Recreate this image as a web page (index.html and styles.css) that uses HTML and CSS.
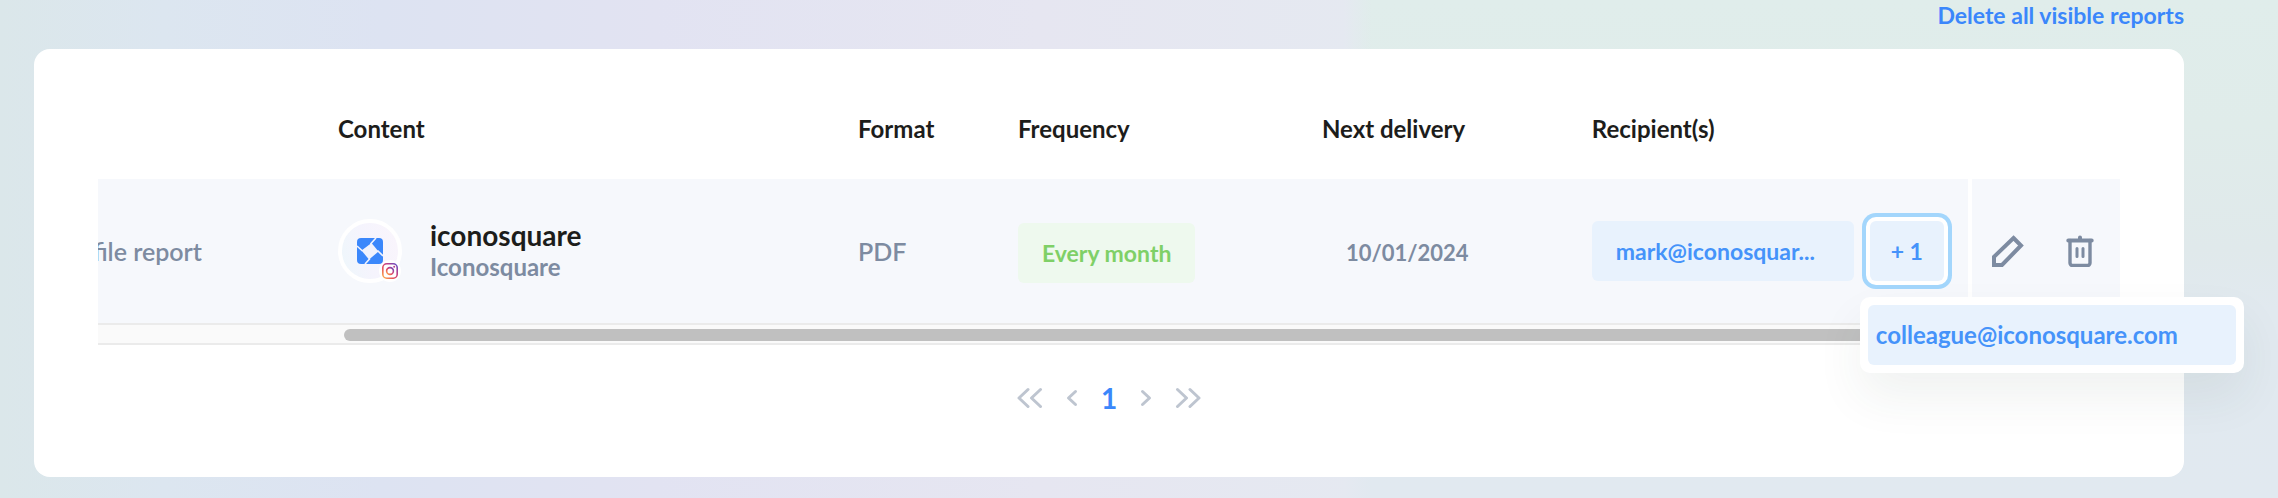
FILE: index.html
```html
<!DOCTYPE html>
<html lang="en">
<head>
<meta charset="utf-8">
<meta name="viewport" content="width=device-width, initial-scale=1">
<title>Scheduled reports</title>
<link rel="stylesheet" href="styles.css">
</head>
<body>
<main class="page">
  <div class="toolbar">
    <button type="button" class="delete-all">Delete all visible reports</button>
  </div>
  <section class="card">
    <table class="reports">
      <colgroup>
        <col class="col-name"><col class="col-content"><col class="col-format"><col class="col-frequency"><col class="col-delivery"><col class="col-recipients"><col class="col-actions">
      </colgroup>
      <thead>
        <tr>
          <th aria-label="Name"></th>
          <th scope="col">Content</th>
          <th scope="col">Format</th>
          <th scope="col">Frequency</th>
          <th scope="col">Next delivery</th>
          <th scope="col">Recipient(s)</th>
          <th aria-label="Actions"></th>
        </tr>
      </thead>
      <tbody>
        <tr>
          <td><div class="clip lead">file report</div></td>
          <td>
            <div class="account">
              <span class="avatar">
                <svg class="brand" viewBox="0 0 26 26" aria-hidden="true">
                  <rect width="26" height="26" rx="4" fill="#3b87fb"/>
                  <path d="M14.5 5 21.5 13.500 12 21.500 4.500 12.500Z" fill="#f1f2fd"/>
                  <path d="M13.500 6 19 0M20.500 12.500 26 18M13 20.500 8 26M5.500 13 0 8" stroke="#f1f2fd" stroke-width="1.600"/>
                </svg>
                <svg class="network" viewBox="0 0 22 22" aria-hidden="true">
                  <defs><linearGradient id="ig" x1="0" y1="1" x2="1" y2="0"><stop offset="0" stop-color="#fdb54a"/><stop offset=".35" stop-color="#e8505b"/><stop offset=".65" stop-color="#bf3f86"/><stop offset="1" stop-color="#5b50c8"/></linearGradient></defs>
                  <circle cx="11" cy="11" r="11" fill="#fff"/>
                  <g fill="none" stroke="url(#ig)" stroke-width="1.600"><rect x="3.800" y="3.800" width="14.400" height="14.400" rx="4"/><circle cx="11" cy="11" r="3.400"/></g>
                  <circle cx="15.200" cy="6.800" r="1" fill="#b5408c"/>
                </svg>
              </span>
              <span class="names">
                <span class="handle">iconosquare</span>
                <span class="label">Iconosquare</span>
              </span>
            </div>
          </td>
          <td class="lead">PDF</td>
          <td class="lowered"><span class="chip chip-green">Every month</span></td>
          <td class="lowered date">10/01/2024</td>
          <td>
            <div class="recipients">
              <span class="chip chip-blue chip-mail">mark@iconosquar...</span>
              <button type="button" class="chip chip-blue more" aria-expanded="true">+ 1</button>
              <div class="popover"><div class="popover-item">colleague@iconosquare.com</div></div>
            </div>
          </td>
          <td class="actions-cell">
            <div class="actions">
              <button type="button" class="icon-button" aria-label="Edit report">
                <svg viewBox="0 0 32 32" fill="none" stroke="#7d8ba1" stroke-width="4"><path d="M21.500 3 29 10.500 10 30H2V21.800Z"/></svg>
              </button>
              <button type="button" class="icon-button" aria-label="Delete report">
                <svg viewBox="0 0 32 32" fill="none" stroke="#7d8ba1" stroke-linecap="round"><path d="M6 5.500V28a2.500 2.500 0 0 0 2.500 2.500h15A2.500 2.500 0 0 0 26 28V5.500" stroke-width="3.400"/><path d="M4.300 5.500H27.700M16 2.500v2" stroke-width="4"/><path d="M13 13.500v8M19 13.500v8" stroke-width="3"/></svg>
              </button>
            </div>
          </td>
        </tr>
      </tbody>
    </table>
    <div class="scrollbar"><div class="thumb"></div></div>
    <nav class="pager" aria-label="Pagination">
      <button type="button" class="icon-button" aria-label="First page"><svg class="wide" viewBox="0 0 26 22"><path d="M11 2.500 2 11l9 8.500M23.500 2.500 14.500 11l9 8.500"/></svg></button>
      <button type="button" class="icon-button" aria-label="Previous page"><svg class="narrow" viewBox="0 0 12 22"><path d="M9.500 4.500 2.500 11l7 6.500"/></svg></button>
      <button type="button" class="current" aria-current="page">1</button>
      <button type="button" class="icon-button" aria-label="Next page"><svg class="narrow" viewBox="0 0 12 22"><path d="M2.500 4.500 9.500 11l-7 6.500"/></svg></button>
      <button type="button" class="icon-button" aria-label="Last page"><svg class="wide" viewBox="0 0 26 22"><path d="M2.500 2.500 11.500 11l-9 8.500M15 2.500 24 11l-9 8.500"/></svg></button>
    </nav>
  </section>
</main>
</body>
</html>
```

FILE: styles.css
```css
* { box-sizing: border-box; }

body {
  margin: 0;
  min-height: 100vh;
  color: #1d1d1b;
  font: 700 24px/32px Lato, sans-serif;
  background:
    linear-gradient(to right, #e5e9f1, rgba(229, 233, 241, 0) 3%) right / 41% 100% no-repeat,
    linear-gradient(to bottom, #e0edeb 0, #e0ecea 25%, #e0e9eb 50%, #e1e9ef 62%, #e1e9f0 100%) right / 41% 100% no-repeat,
    linear-gradient(to right, #dbe7ea 0, #dce6f0 12%, #dde3f2 28%, #e2e3f2 48%, #e6e6f1 76%, #e5e9f1 100%) left / 60% 100% no-repeat #e1e9ef;
}

button {
  margin: 0;
  padding: 0;
  border: 0;
  background: none;
  color: inherit;
  font: inherit;
  cursor: pointer;
}

svg { display: block; }

.page { padding: 0 94px 20px 34px; }

.toolbar {
  display: flex;
  justify-content: flex-end;
  height: 49px;
}

.delete-all {
  height: 30px;
  color: #3b87fb;
  font-size: 23px;
  line-height: 30px;
}

.card {
  padding: 48px 64px 63px;
  border-radius: 16px;
  background: #fff;
}

.reports {
  width: 100%;
  table-layout: fixed;
  border-collapse: separate;
  border-spacing: 0;
}

.col-name { width: 11.87%; }
.col-content { width: 25.72%; }
.col-format { width: 7.91%; }
.col-frequency { width: 15.03%; }
.col-delivery { width: 13.35%; }
.col-recipients { width: 18.6%; }

th {
  height: 82px;
  padding: 16px 0 34px;
  text-align: left;
  font-weight: 700;
}

td {
  height: 144px;
  padding: 0;
  background: #f6f8fc;
  white-space: nowrap;
}

.lead {
  color: #7d8ba1;
  font-size: 25px;
  font-weight: 600;
}

.lowered { padding-top: 4px; }

.clip {
  display: flex;
  justify-content: flex-end;
  width: 104px;
  overflow: hidden;
}

.account {
  display: flex;
  align-items: center;
  gap: 28px;
}

.avatar {
  position: relative;
  display: grid;
  place-items: center;
  width: 64px;
  height: 64px;
  border: 4px solid #fff;
  border-radius: 50%;
  background: linear-gradient(75deg, #eef7fb, #f5f4fd 45%, #faf5fc);
}

.brand { width: 26px; height: 26px; }

.network {
  position: absolute;
  right: -3px;
  bottom: -3px;
  width: 22px;
  height: 22px;
}

.names {
  display: flex;
  flex-direction: column;
}

.handle { font-size: 28px; }

.label { color: #7d8ba1; }

.chip {
  display: inline-block;
  height: 60px;
  padding: 0 24px;
  border-radius: 6px;
  line-height: 60px;
}

.chip-green {
  color: #7fd067;
  background: #eef9ee;
  font-size: 23px;
}

.date {
  padding-left: 24px;
  color: #7d8ba1;
  font-size: 22px;
}

.recipients {
  position: relative;
  display: flex;
  gap: 16px;
}

.chip-blue {
  color: #4593fa;
  background: #e8f2fd;
  font-size: 23px;
}

.chip-mail { width: 262px; }

.more {
  width: 74px;
  padding: 0;
  box-shadow: 0 0 0 4px #fff, 0 0 0 8px #a3d6fc;
}

.popover {
  position: absolute;
  z-index: 1;
  top: 76px;
  left: 268px;
  width: 384px;
  padding: 8px;
  border-radius: 10px;
  background: #fff;
  box-shadow: 0 24px 48px rgba(40, 70, 60, 0.07);
}

.popover-item {
  padding: 0 8px;
  border-radius: 6px;
  color: #4593fa;
  background: #e8f2fd;
  line-height: 60px;
}

.actions-cell { border-left: 4px solid #fff; }

.actions {
  display: flex;
  gap: 40px;
  padding-left: 20px;
}

.actions svg { width: 32px; height: 32px; }

.scrollbar {
  height: 22px;
  padding: 4px 0 4px 246px;
  border: solid #ebebeb;
  border-width: 2px 0;
  background: #fafafa;
}

.thumb {
  height: 12px;
  margin-right: 152px;
  border-radius: 6px;
  background: #c0c0c0;
}

.pager {
  display: flex;
  justify-content: center;
  align-items: center;
  gap: 23px;
  margin-top: 37px;
  height: 32px;
}

.pager svg {
  height: 22px;
  fill: none;
  stroke: #bec5d0;
  stroke-width: 3;
  stroke-linecap: round;
  stroke-linejoin: round;
}

.wide { width: 26px; }
.narrow { width: 12px; }

.current {
  color: #3b87fb;
  font-size: 28px;
}
```
